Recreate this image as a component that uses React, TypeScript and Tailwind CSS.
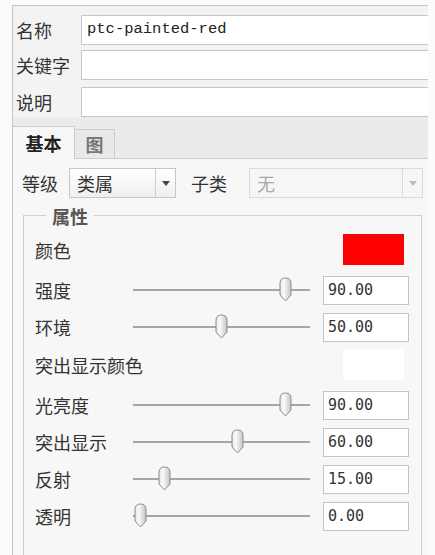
const cjk = "font-['Noto_Sans_CJK_SC',sans-serif]";

const props: ({ kind: "swatch"; label: string; color: string } | { kind: "slider"; label: string; value: number })[] = [
  { kind: "swatch", label: "颜色", color: "#ff0000" },
  { kind: "slider", label: "强度", value: 90 },
  { kind: "slider", label: "环境", value: 50 },
  { kind: "swatch", label: "突出显示颜色", color: "#ffffff" },
  { kind: "slider", label: "光亮度", value: 90 },
  { kind: "slider", label: "突出显示", value: 60 },
  { kind: "slider", label: "反射", value: 15 },
  { kind: "slider", label: "透明", value: 0 },
];

export default function App() {
  return (
    <div className={`h-[555px] w-[435px] overflow-hidden bg-[#fbfbfb] pl-[12px] pr-[7px] pt-[5px] ${cjk} text-[#333]`}>
      <div className="flex h-full flex-col overflow-hidden border-l border-t border-[#c4c4c4] bg-[#f3f3f3]">
        <div className="shrink-0 pt-[9px]">
          <TextRow label="名称" value="ptc-painted-red" />
          <TextRow label="关键字" value="" className="mt-[5px]" />
          <TextRow label="说明" value="" className="mt-[7px]" />
        </div>

        <div className="flex h-[42px] shrink-0 items-end border-b border-[#cdcdcd] bg-[#ebebeb]">
          <div className="-mb-px flex h-[33px] w-[62px] items-center justify-center border-r border-t border-[#cdcdcd] bg-[#f7f7f7] text-[18px] font-bold leading-none text-[#222]">
            基本
          </div>
          <div className="flex h-[29px] w-[40px] items-center justify-center border-r border-t border-[#cdcdcd] bg-[#e9e9e9] text-[18px] font-bold leading-none text-[#777]">
            图
          </div>
        </div>

        <div className="min-h-0 flex-1 bg-[#f7f7f7] pt-[9px]">
          <div className="flex h-[30px] items-center pl-[9px]">
            <span className="w-[47px] text-[18px] leading-none">等级</span>
            <Select value="类属" className="w-[107px]" />
            <span className="ml-[15px] w-[58px] text-[18px] leading-none">子类</span>
            <Select value="无" className="w-[174px]" disabled />
          </div>

          <div className="relative ml-[10px] mr-[6px] mt-[17px] h-[345px] border-l border-r border-t border-[#cfcfcf] pl-[11px] pr-[11px] pt-[18px]">
            <span className="absolute -top-[11px] left-[22px] bg-[#f7f7f7] px-[6px] text-[18px] font-bold leading-[22px] text-[#555]">
              属性
            </span>
            <div className="flex flex-col gap-[7px]">
              {props.map((p) =>
                p.kind === "swatch" ? (
                  <div key={p.label} className="mb-[3px] flex h-[31px] items-center">
                    <span className="text-[18px] leading-none">{p.label}</span>
                    <div className="ml-auto mr-[6px] h-full w-[61px]" style={{ backgroundColor: p.color }} />
                  </div>
                ) : (
                  <SliderRow key={p.label} label={p.label} value={p.value} />
                )
              )}
            </div>
          </div>
        </div>
      </div>
    </div>
  );
}

function TextRow({ label, value, className = "" }: { label: string; value: string; className?: string }) {
  return (
    <div className={`flex h-[30px] items-center ${className}`}>
      <span className="w-[68px] pl-[3px] text-[18px] leading-none">{label}</span>
      <div className="flex h-full flex-1 items-center border border-r-0 border-[#c6c6c6] bg-white pl-[5px] font-['Liberation_Mono',monospace] text-[15.5px] text-[#222]">
        {value}
      </div>
    </div>
  );
}

function Select({ value, className, disabled = false }: { value: string; className: string; disabled?: boolean }) {
  return (
    <div
      className={`flex h-[30px] items-stretch border ${disabled ? "border-[#dadada] bg-[#f6f6f6] text-[#aaa]" : "border-[#c6c6c6] bg-gradient-to-b from-white to-[#efefef] text-[#333]"} ${className}`}
    >
      <span className="flex flex-1 items-center pl-[7px] text-[18px] leading-none">{value}</span>
      <span className={`flex w-[20px] items-center justify-center border-l ${disabled ? "border-[#dadada]" : "border-[#cfcfcf]"}`}>
        <svg width="8" height="5" viewBox="0 0 8 5">
          <path d="M0 0 H8 L4 5 Z" fill={disabled ? "#bbbbbb" : "#444444"} />
        </svg>
      </span>
    </div>
  );
}

function SliderRow({ label, value }: { label: string; value: number }) {
  return (
    <div className="flex h-[30px] items-center">
      <span className="w-[98px] text-[18px] leading-none">{label}</span>
      <div className="relative flex h-full w-[177px] items-center">
        <div className="h-[2px] w-full bg-[#a6a6a6]" />
        <Thumb left={0.5 + value * 1.62} />
      </div>
      <div className="ml-[13px] flex h-[29px] w-[86px] items-center border border-[#c4c4c4] bg-white pl-[4px] font-['DejaVu_Sans_Mono',monospace] text-[15px] text-[#333]">
        {value.toFixed(2)}
      </div>
    </div>
  );
}

function Thumb({ left }: { left: number }) {
  return (
    <svg className="absolute top-[2px]" style={{ left }} width="13" height="25" viewBox="0 0 13 25">
      <defs>
        <linearGradient id="thumb" x1="0" y1="0" x2="1" y2="0">
          <stop offset="0" stopColor="#e4e4e4" />
          <stop offset="0.35" stopColor="#fbfbfb" />
          <stop offset="1" stopColor="#c4c4c4" />
        </linearGradient>
      </defs>
      <path d="M1 6.5 Q1 1 6.5 1 Q12 1 12 6.5 L12 18 L6.5 24 L1 18 Z" fill="url(#thumb)" stroke="#8c8c8c" strokeWidth="1" />
    </svg>
  );
}
